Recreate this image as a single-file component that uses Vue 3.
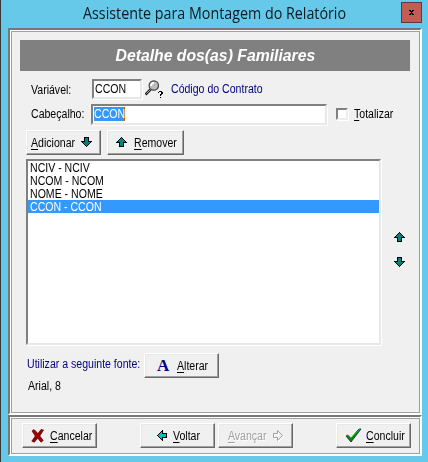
<script setup>
const fields = ['NCIV - NCIV', 'NCOM - NCOM', 'NOME - NOME', 'CCON - CCON']
const selected = 3
</script>

<template>
  <main class="window">
    <header class="titlebar">
      <h1><span>Assistente para Montagem do Relatório</span></h1>
      <button class="close" aria-label="Fechar">
        <svg width="5" height="5" viewBox="0 0 5 5"><path d="M0 0h2v1h1V0h2v1H4v1H3v1h1v1h1v1H3V4H2v1H0V4h1V3h1V2H1V1H0z" /></svg>
      </button>
    </header>

    <section class="panel content">
      <h2><span>Detalhe dos(as) Familiares</span></h2>

      <div class="row variable">
        <label class="t">Variável:</label>
        <div class="input small"><span class="t">CCON</span></div>
        <svg class="lens" width="20" height="20" viewBox="0 0 20 20">
          <path d="M5.500 9.500L.5 14.500" stroke="#222" stroke-width="2.600" />
          <path d="M5.500 9.500L1.500 13.500" stroke="#aaa" stroke-width="1" />
          <circle cx="8.800" cy="5.500" r="4.700" fill="#bdbdbd" stroke="#444" stroke-width="1.200" />
          <path d="M6 6q0-3 3-3.200" fill="none" stroke="#fff" stroke-width="1.800" />
          <path d="M13 12h1v-1h3v1h1v2h-1v1h-1v1h-1v-2h1v-2h-2v1h-1zM15 17h1v1h-1z" shape-rendering="crispEdges" />
        </svg>
        <span class="t navy desc">Código do Contrato</span>
      </div>

      <div class="row heading">
        <label class="t">Cabeçalho:</label>
        <div class="input wide"><span class="mark"><span class="t">CCON</span></span></div>
        <i class="checkbox"></i>
        <span class="t total"><u>T</u>otalizar</span>
      </div>

      <div class="row actions">
        <button class="btn add"><span class="t"><u>A</u>dicionar</span>
          <svg width="11" height="10" viewBox="0 0 11 10"><path class="teal" d="M3.5.5h4v4h3l-5 5-5-5h3z" /></svg>
        </button>
        <button class="btn remove">
          <svg width="11" height="10" viewBox="0 0 11 10"><path class="teal" d="M3.5 9.5h4v-4h3l-5-5-5 5h3z" /></svg>
          <span class="t"><u>R</u>emover</span>
        </button>
      </div>

      <div class="row lists">
        <ul class="list">
          <li v-for="(field, i) in fields" :key="field" :class="{ selected: i === selected }"><span class="t">{{ field }}</span></li>
        </ul>
        <div class="order">
          <svg width="11" height="10" viewBox="0 0 11 10"><path class="teal" d="M3.5 9.5h4v-4h3l-5-5-5 5h3z" /></svg>
          <svg width="11" height="10" viewBox="0 0 11 10"><path class="teal" d="M3.5.5h4v4h3l-5 5-5-5h3z" /></svg>
        </div>
      </div>

      <div class="row font">
        <span class="t navy">Utilizar a seguinte fonte:</span>
        <button class="btn alter"><b>A</b><span class="t"><u>A</u>lterar</span></button>
      </div>
      <div class="fontname"><span class="t">Arial, 8</span></div>
    </section>

    <footer class="panel navigation">
      <button class="btn cancel">
        <svg width="13" height="14" viewBox="0 0 13 14"><path d="M1 2l2-1.500L7 4.500l3-4 2.500.5L8.800 7l3.400 4.500-2.200 1.700-3.200-4L3.300 13.200l-2.500-1L4.300 7z" fill="#980000" stroke="#500" stroke-width=".7" /><path d="M2 2l9 10" stroke="#c00000" /></svg>
        <span class="t"><u>C</u>ancelar</span>
      </button>
      <button class="btn back">
        <svg width="10" height="11" viewBox="0 0 10 11"><path class="cyan" d="M9.500 3.500v4h-4v3l-5-5 5-5v3z" /></svg>
        <span class="t"><u>V</u>oltar</span>
      </button>
      <button class="btn next" disabled>
        <span class="t"><u>A</u>vançar</span>
        <svg width="11" height="12" viewBox="0 0 11 12"><path d="M1.500 4.500v4h4v3l5-5-5-5v3z" fill="none" stroke="#fff" /><path d="M.5 3.500v4h4v3l5-5-5-5v3z" fill="none" stroke="#a0a0a0" /></svg>
      </button>
      <button class="btn finish">
        <svg width="17" height="15" viewBox="0 0 17 15"><path d="M1 8l2-1 3 3 8-9 2 0-10 13z" fill="#008a00" stroke="#002060" stroke-width=".8" /><path d="M1 8l2-1 3 3 9-9" fill="none" stroke="#00c800" /></svg>
        <span class="t"><u>C</u>oncluir</span>
      </button>
    </footer>
  </main>
</template>

<style>
body { margin: 0; overflow: hidden; }
</style>

<style scoped>
* { box-sizing: border-box; }
.window { width: 428px; height: 462px; padding: 0 6px 0 7px; border-left: 1px solid #33383c; background: #66c9e9; font: 12px/13px "Liberation Sans", sans-serif; color: #000; }
.titlebar { display: flex; height: 28px; }
h1 { margin: 0 0 0 75px; width: 318px; font: 16px/26px "Open Sans", sans-serif; white-space: nowrap; color: #0c1a20; }
h1 span { display: inline-block; transform: scaleX(.893); transform-origin: left; }
.close { margin-top: 2px; width: 21px; height: 21px; padding: 0; border: 1px solid #63383a; background: #c35c55; display: flex; align-items: center; justify-content: center; }
svg { flex: none; display: block; }
.panel { width: 414px; border: 2px solid; border-color: #777 #fff #fff #777; background: #f0f0f0; box-shadow: inset 1px 1px #fff, inset 2px 2px #a0a0a0, inset -1px -1px #a0a0a0; }
.content { height: 387px; padding: 10px 10px 0; }
h2 { height: 31px; margin: 0; background: #808080; color: #fff; text-align: center; font: italic bold 16px/31px "Liberation Sans", sans-serif; }
h2 span { display: inline-block; white-space: nowrap; transform: scaleX(.985); }
.row { display: flex; }
.t { display: inline-block; flex: none; white-space: nowrap; transform: scaleX(.88); transform-origin: left; }
u { text-decoration: underline; text-underline-offset: 2px; text-decoration-thickness: 1px; text-decoration-skip-ink: none; }
.navy { color: #000080; }
.input, .list { background: #fff; border: 2px solid; border-color: #808080 #e8e8e8 #e8e8e8 #808080; box-shadow: 1px 1px #fff; }
.variable { margin-top: 8px; height: 20px; padding-left: 11px; }
.variable > label { width: 61px; padding-top: 5px; }
.small { width: 50px; height: 20px; padding: 2px 0 0 1px; }
.lens { margin: 1px 0 0 3px; }
.desc { margin: 4px 0 0 6px; }
.heading { margin-top: 5px; height: 21px; padding-left: 11px; }
.heading > label { width: 60px; padding-top: 4px; }
.wide { width: 236px; height: 21px; padding: 1px; }
.mark { display: block; width: 31px; height: 14px; padding-top: 1px; background: #3399ff; color: #fff; border-right: 1px solid #c66200; }
.checkbox { width: 12px; height: 12px; margin: 4px 0 0 9px; background: #fff; border: 2px solid; border-color: #808080 #eee #eee #808080; box-shadow: 1px 1px #fff; }
.total { margin: 4px 0 0 6px; }
.actions { margin-top: 5px; padding-left: 6px; gap: 6px; }
.btn { height: 25px; width: 75px; padding: 0; border: 1px solid; border-color: #fff #696969 #696969 #fff; box-shadow: inset -1px -1px #a0a0a0, inset 1px 1px #e8e8e8; background: #f0f0f0; display: flex; align-items: center; color: #000; font: 12px/13px "Liberation Sans", sans-serif; }
.btn .t { padding-top: 2px; }
.teal { fill: #008080; stroke: #000; shape-rendering: crispEdges; }
.cyan { fill: #00c0c0; stroke: #000; shape-rendering: crispEdges; }
.add { padding-left: 4px; }
.add .t { width: 50px; }
.add svg { margin-top: -2px; }
.remove { width: 77px; padding-left: 8px; }
.remove svg { margin: -2px 7px 0 0; }
.lists { margin-top: 4px; padding-left: 6px; }
.list { width: 355px; height: 186px; margin: 0; padding: 0; list-style: none; }
.list li { height: 13px; padding-left: 2px; }
.list .t { padding-top: 1px; }
.list .selected { background: #3399ff; color: #fff; }
.order { padding: 73px 0 0 13px; display: flex; flex-direction: column; gap: 15px; }
.font { margin-top: 8px; padding-left: 7px; height: 25px; }
.font > .t { width: 117px; padding-top: 5px; }
.alter { padding-left: 12px; }
.alter b { font: bold 17px/16px "Liberation Serif", serif; color: #000080; width: 20px; text-align: left; }
.fontname { padding: 2px 0 0 8px; }
.navigation { height: 41px; padding: 6px 9px 0 12px; display: flex; }
.cancel { padding-left: 8px; }
.cancel svg { margin-right: 6px; }
.back { margin-left: 43px; padding-left: 16px; }
.back svg { margin-right: 6px; }
.next { margin-left: 3px; padding-left: 8px; color: #a0a0a0; text-shadow: 1px 1px #fff; }
.next .t { width: 46px; }
.finish { margin-left: 43px; padding-left: 8px; }
.finish svg { margin-right: 4px; }
</style>
